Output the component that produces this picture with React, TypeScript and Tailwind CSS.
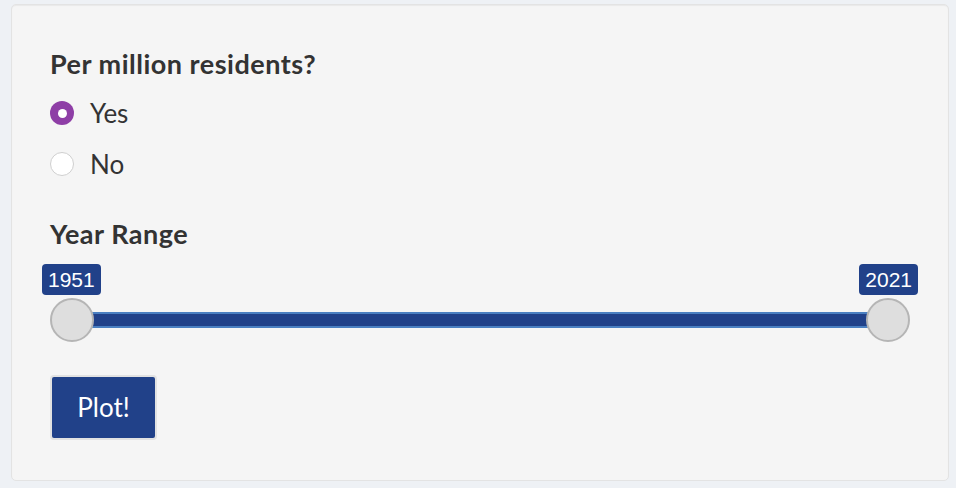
export default function App() {
  return (
    <main className="min-h-screen bg-[#eef1f5] pt-[4px] pl-[11px] pr-[7px] pb-[7px] font-['Lato',sans-serif] text-[#333]">
      <div className="h-[477px] rounded-[5px] border border-[#e3e3e3] bg-[#f5f5f5] pl-[38px] pr-[38px] pt-[43px] shadow-[inset_0_1px_1px_rgba(0,0,0,0.05)]">
        <h2 className="text-[27px] font-bold leading-[32px] tracking-[0.5px]">Per million residents?</h2>

        <div className="mt-[21px] flex flex-col gap-[27px]">
          <label className="flex items-center gap-[16px] text-[26px] leading-[24px]">
            <span className="flex h-[24px] w-[24px] items-center justify-center rounded-full bg-[#8e3ea6]">
              <span className="h-[9px] w-[9px] rounded-full bg-white" />
            </span>
            Yes
          </label>
          <label className="flex items-center gap-[16px] text-[26px] leading-[24px]">
            <span className="h-[24px] w-[24px] rounded-full border border-[#cfcfcf] bg-white" />
            No
          </label>
        </div>

        <h2 className="mt-[42px] text-[27px] font-bold leading-[32px] tracking-[0.5px]">Year Range</h2>

        {/* Range slider */}
        <div className="mt-[14px]">
          <div className="-mx-[8px] flex justify-between font-['Liberation_Sans',sans-serif] text-[21px] leading-[27px] text-white">
            <span className="rounded-[4px] bg-[#214189] px-[6px] py-[2px]">1951</span>
            <span className="rounded-[4px] bg-[#214189] px-[6px] py-[2px]">2021</span>
          </div>
          <div className="mt-[3px] flex h-[44px] items-center">
            <span className="relative z-10 h-[44px] w-[44px] shrink-0 rounded-full border-2 border-[#b5b5b5] bg-[#dedede]" />
            <div className="-mx-[22px] h-[16px] flex-1 border-y-2 border-[#4a7fc1] bg-[#214189]" />
            <span className="relative z-10 h-[44px] w-[44px] shrink-0 rounded-full border-2 border-[#b5b5b5] bg-[#dedede]" />
          </div>
        </div>

        <button className="mt-[33px] h-[65px] w-[107px] rounded-[4px] border-2 border-[#e2e2e2] bg-[#214189] text-[26px] text-white">
          Plot!
        </button>
      </div>
    </main>
  );
}
